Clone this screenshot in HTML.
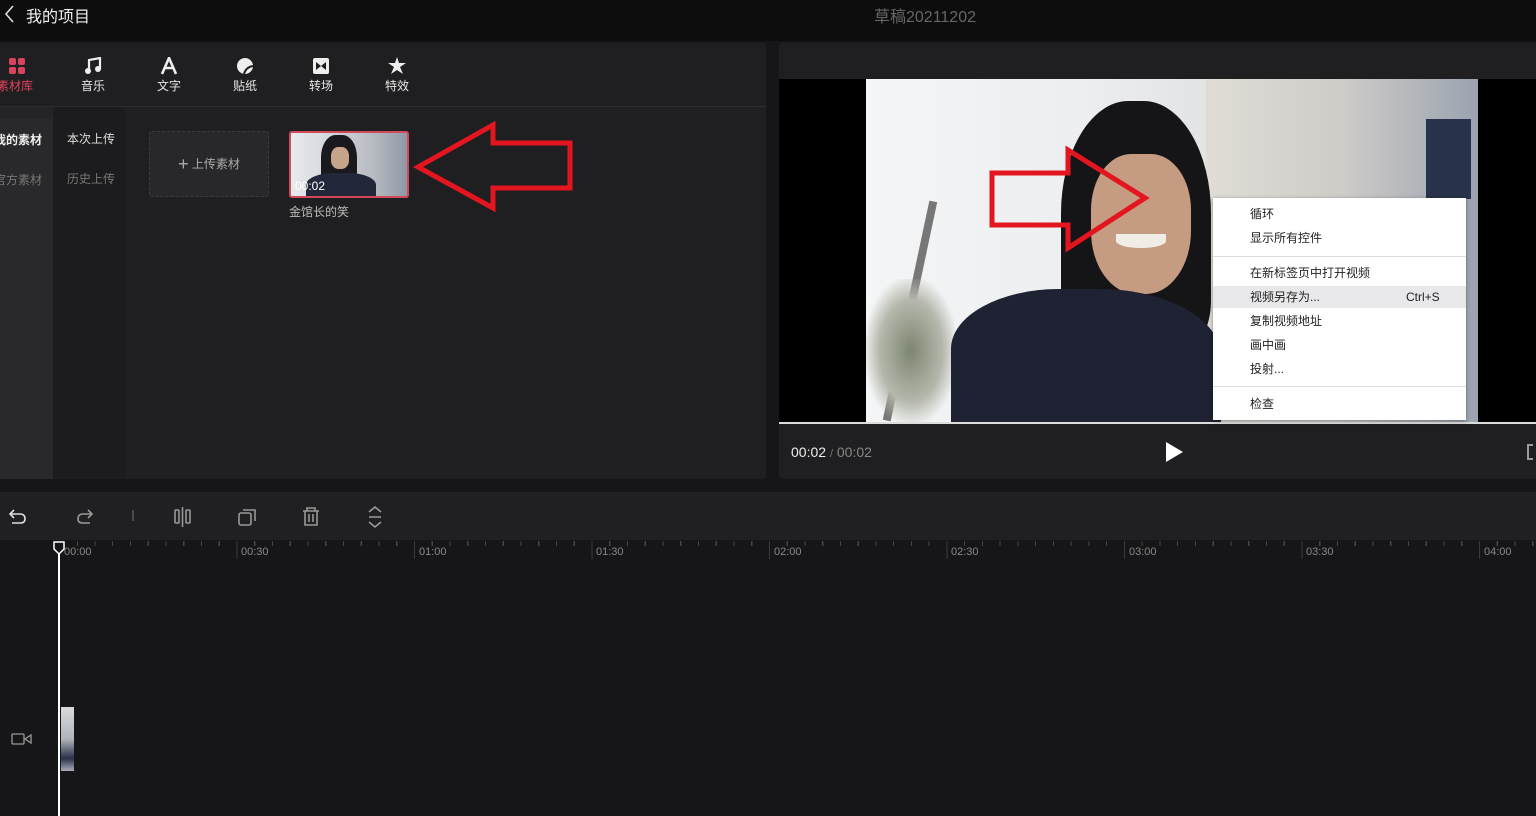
<!DOCTYPE html>
<html><head><meta charset="utf-8"><style>
*{margin:0;padding:0;box-sizing:border-box}
body{width:1536px;height:816px;background:#161618;position:relative;overflow:hidden;font-family:"Liberation Sans","Noto Sans CJK SC",sans-serif;color:#ddd}
.a{position:absolute}
.tab{position:absolute;top:55px;width:50px;text-align:center;font-size:12px;color:#e6e6e6}
.tab .ic{height:22px;display:flex;justify-content:center;align-items:center}
.mi{position:absolute;left:37px;font-size:12px;color:#222;line-height:16px}
.tl{position:absolute;top:546px;font-size:11px;color:#888}
</style></head><body>
<div class="a" style="left:0;top:0;width:1536px;height:41px;background:#0d0d0e"></div>
<svg class="a" style="left:3px;top:4px" width="14" height="20"><path d="M10 2 L3 10 L10 18" stroke="#ddd" stroke-width="1.6" fill="none"/></svg>
<div class="a" style="left:26px;top:3px;font-size:16px;color:#eee">我的项目</div>
<div class="a" style="left:874px;top:3px;font-size:16px;color:#666">草稿20211202</div>

<div class="a" style="left:0;top:43px;width:766px;height:436px;background:#1f1f21;border-radius:0 4px 4px 0"></div>
<div class="a" style="left:0;top:106px;width:766px;height:1px;background:#2c2c2e"></div>
<div class="a" style="left:0;top:107px;width:53px;height:372px;background:#29292b"></div>
<div class="a" style="left:0;top:107px;width:53px;height:12px;background:#242426"></div>
<div class="a" style="left:53px;top:107px;width:72px;height:372px;background:#1c1c1e"></div>
<div class="a" style="left:0;top:131px;font-size:12px;color:#eee;font-weight:bold;margin-left:-6px">我的素材</div>
<div class="a" style="left:0;top:171px;font-size:12px;color:#777;margin-left:-6px">官方素材</div>
<div class="a" style="left:67px;top:130px;font-size:12px;color:#ddd">本次上传</div>
<div class="a" style="left:67px;top:170px;font-size:12px;color:#777">历史上传</div>

<div class="tab" style="left:-8px;color:#e0405a"><div class="ic"><svg width="18" height="18"><rect x="1" y="1" width="7" height="7" rx="2" fill="#d8435e"/><rect x="10" y="1" width="7" height="7" rx="2" fill="#d8435e"/><rect x="1" y="10" width="7" height="7" rx="2" fill="#d8435e"/><rect x="10" y="10" width="7" height="7" rx="2" fill="#d8435e"/></svg></div><span style="margin-left:-4px">素材库</span></div>
<div class="tab" style="left:68px"><div class="ic"><svg width="18" height="18"><path d="M5 14 V3 L16 1 V12" stroke="#eee" stroke-width="2.2" fill="none"/><circle cx="4" cy="14" r="3" fill="#eee"/><circle cx="14" cy="12" r="3" fill="#eee"/></svg></div>音乐</div>
<div class="tab" style="left:144px"><div class="ic"><svg width="18" height="18"><path d="M2 17 L9 1 L16 17 M5 11 H13" stroke="#eee" stroke-width="2.6" fill="none"/></svg></div>文字</div>
<div class="tab" style="left:220px"><div class="ic"><svg width="18" height="18"><circle cx="9" cy="9" r="8" fill="#eee"/><path d="M8 17 Q10 10 17 9" stroke="#1f1f21" stroke-width="2" fill="none"/></svg></div>贴纸</div>
<div class="tab" style="left:296px"><div class="ic"><svg width="18" height="18"><rect x="1" y="1" width="16" height="16" rx="2" fill="#eee"/><path d="M4 5 L9 9 L4 13Z M14 5 L9 9 L14 13Z" fill="#1f1f21"/></svg></div>转场</div>
<div class="tab" style="left:372px"><div class="ic"><svg width="20" height="18"><path d="M10 0 L12 6 L19 6 L13 10 L16 17 L10 13 L4 17 L7 10 L1 6 L8 6Z" fill="#eee"/></svg></div>特效</div>

<div class="a" style="left:149px;top:131px;width:120px;height:66px;border:1px dashed #3b3b3e;background:#28282a;border-radius:3px;font-size:12px;color:#aaa;text-align:center;line-height:64px"><span style="font-size:18px;vertical-align:-2px">+</span> 上传素材</div>
<div class="a" style="left:289px;top:131px;width:120px;height:67px;border:2px solid #d04a5a;border-radius:3px;overflow:hidden;background:linear-gradient(90deg,#e8eaec 0%,#cfd3d8 40%,#b8bcc2 70%,#8e98a6 100%)">
<div class="a" style="left:30px;top:2px;width:36px;height:56px;background:#1a1a1e;border-radius:40% 40% 10% 10%"></div>
<div class="a" style="left:40px;top:14px;width:18px;height:22px;background:#c6a48a;border-radius:40%"></div>
<div class="a" style="left:15px;top:40px;width:70px;height:30px;background:#22283a;border-radius:40% 40% 0 0"></div>
<div class="a" style="left:4px;top:46px;font-size:12px;color:#fff">00:02</div></div>
<div class="a" style="left:289px;top:203px;font-size:12px;color:#bbb">金馆长的笑</div>

<div class="a" style="left:779px;top:43px;width:757px;height:436px;background:#1f1f21;border-radius:4px 0 0 4px"></div>
<div class="a" style="left:779px;top:79px;width:757px;height:344px;background:#000"></div>
<div class="a" style="left:866px;top:79px;width:612px;height:344px;overflow:hidden;background:linear-gradient(90deg,#f4f5f6 0%,#eceef0 35%,#dfe1e4 60%,#c9ccd1 80%,#a9b0ba 100%)">
<div class="a" style="left:40px;top:120px;width:8px;height:224px;background:#777;transform:rotate(12deg)"></div>
<div class="a" style="left:0;top:200px;width:90px;height:144px;background:radial-gradient(ellipse,#7d8670 0%,#b5b8ac 50%,transparent 75%)"></div>
<div class="a" style="left:340px;top:0;width:272px;height:344px;background:linear-gradient(90deg,#e0dcd6,#cfccc8 50%,#9aa3b0)"></div>
<div class="a" style="left:560px;top:40px;width:45px;height:80px;background:#28324a"></div>
<div class="a" style="left:195px;top:22px;width:150px;height:250px;background:#151518;border-radius:45% 45% 20% 20%"></div>
<div class="a" style="left:225px;top:75px;width:100px;height:140px;background:#c59c82;border-radius:40% 40% 45% 45%"></div>
<div class="a" style="left:250px;top:155px;width:50px;height:14px;background:#f0ece6;border-radius:0 0 50% 50%"></div>
<div class="a" style="left:85px;top:210px;width:270px;height:150px;background:#1e2233;border-radius:40% 45% 0 0"></div>
</div>
<div class="a" style="left:779px;top:422px;width:757px;height:2px;background:#ddd"></div>
<div class="a" style="left:791px;top:444px;font-size:14px;color:#eee">00:02 <span style="color:#777;font-size:11px">/</span> <span style="color:#888">00:02</span></div>
<svg class="a" style="left:1164px;top:441px" width="20" height="22"><path d="M2 1 L19 11 L2 21Z" fill="#fff"/></svg>
<div class="a" style="left:1527px;top:444px;width:6px;height:16px;border-left:2px solid #999;border-top:2px solid #999;border-bottom:2px solid #999"></div>

<div class="a" style="left:1213px;top:198px;width:253px;height:222px;background:#fff;box-shadow:0 1px 4px rgba(0,0,0,.4)">
<div class="a" style="left:0;top:88px;width:253px;height:22px;background:#e8e8ea"></div>
<div class="a" style="left:0;top:58px;width:253px;height:1px;background:#ddd"></div>
<div class="a" style="left:0;top:188px;width:253px;height:1px;background:#ddd"></div>
<div class="mi" style="top:8px">循环</div>
<div class="mi" style="top:32px">显示所有控件</div>
<div class="mi" style="top:67px">在新标签页中打开视频</div>
<div class="mi" style="top:91px">视频另存为...</div>
<div class="mi" style="top:91px;left:193px">Ctrl+S</div>
<div class="mi" style="top:115px">复制视频地址</div>
<div class="mi" style="top:139px">画中画</div>
<div class="mi" style="top:163px">投射...</div>
<div class="mi" style="top:198px">检查</div>
</div>

<svg class="a" style="left:0;top:0" width="1536" height="816">
<polygon points="418,167 493,125 493,143 570,143 570,188 493,188 493,208" fill="none" stroke="#e3161f" stroke-width="5" stroke-linejoin="miter"/>
<polygon points="992,173 1068,173 1068,150 1145,198 1068,248 1068,225 992,225" fill="none" stroke="#e3161f" stroke-width="5"/>
</svg>

<div class="a" style="left:0;top:492px;width:1536px;height:48px;background:#202022"></div>
<svg class="a" style="left:0;top:500px" width="400" height="34">
<g stroke="#ddd" stroke-width="1.6" fill="none"><path d="M14 10 L10 14 L14 18 M10 14 H20 Q25 14 25 19 Q25 23 20 23 H12"/></g>
<g stroke="#999" stroke-width="1.6" fill="none"><path d="M88 10 L92 14 L88 18 M92 14 H83 Q78 14 78 19 Q78 23 83 23 H90"/>
<path d="M133 10 V21" stroke="#555"/>
<rect x="175" y="10" width="4" height="13" rx="1"/><rect x="186" y="10" width="4" height="13" rx="1"/><path d="M182.5 7 V27"/>
<rect x="239" y="13" width="12" height="12" rx="2"/><path d="M243 10 H255 V21"/>
<path d="M303 11 H319 M307 11 V8 H315 V11 M305 11 V25 H317 V11 M309 14 V22 M313 14 V22"/>
<path d="M369 12 L375 7 L381 12 M369 17 H381 M369 22 L375 27 L381 22"/></g></svg>

<div class="a" style="left:59px;top:541px;width:1477px;height:5px;background:repeating-linear-gradient(90deg,#444 0 1px,transparent 1px 17.75px)"></div>
<div class="a" style="left:59px;top:541px;width:1477px;height:18px;background:repeating-linear-gradient(90deg,#3a3a3c 0 1px,transparent 1px 177.5px)"></div>
<div class="tl" style="left:64px">00:00</div><div class="tl" style="left:241px">00:30</div><div class="tl" style="left:419px">01:00</div><div class="tl" style="left:596px">01:30</div><div class="tl" style="left:774px">02:00</div><div class="tl" style="left:951px">02:30</div><div class="tl" style="left:1129px">03:00</div><div class="tl" style="left:1306px">03:30</div><div class="tl" style="left:1484px">04:00</div>
<div class="a" style="left:58px;top:550px;width:2px;height:266px;background:#fff"></div>
<svg class="a" style="left:53px;top:541px" width="12" height="14"><path d="M1 1 H11 V8 L6 13 L1 8Z" fill="#161618" stroke="#fff" stroke-width="1.5"/></svg>
<div class="a" style="left:61px;top:707px;width:13px;height:64px;background:linear-gradient(180deg,#d8dadc,#b0b4ba 50%,#2a3048 80%,#aab)"></div>
<svg class="a" style="left:11px;top:733px" width="22" height="12"><rect x="1" y="1" width="12" height="10" rx="1" stroke="#999" fill="none" stroke-width="1.3"/><path d="M14 6 L20 2 V10Z" stroke="#999" fill="none" stroke-width="1.3"/></svg>
</body></html>
